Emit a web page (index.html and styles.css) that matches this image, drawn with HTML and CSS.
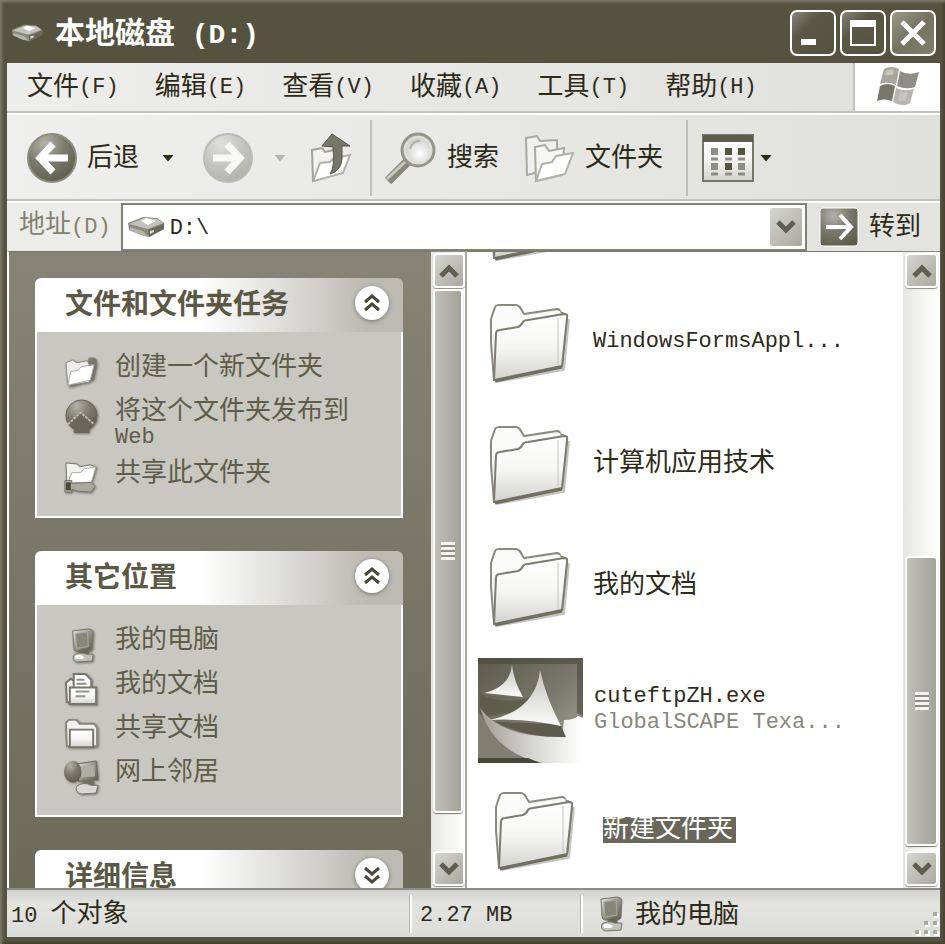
FILE: index.html
```html
<!DOCTYPE html>
<html lang="zh-CN">
<head>
  <meta charset="UTF-8">
  <meta name="viewport" content="width=device-width, initial-scale=1.0">
  <title>本地磁盘 (D:)</title>
  <link rel="stylesheet" href="styles.css">
</head>
<body>

<!-- Shared icons -->
<svg class="defs" aria-hidden="true">
  <defs>
    <linearGradient id="gFolder" x1="0" y1="0" x2="0" y2="1">
      <stop offset="0" stop-color="#ffffff"/>
      <stop offset="0.5" stop-color="#f6f6f5"/>
      <stop offset="1" stop-color="#d3d3cd"/>
    </linearGradient>
    <linearGradient id="gMetal" x1="0" y1="0" x2="1" y2="1">
      <stop offset="0" stop-color="#e6e6e0"/>
      <stop offset="0.5" stop-color="#95948a"/>
      <stop offset="1" stop-color="#5b5a4b"/>
    </linearGradient>
    <radialGradient id="gBack" cx="0.35" cy="0.2" r="0.85">
      <stop offset="0" stop-color="#b4b3a9"/>
      <stop offset="0.5" stop-color="#7b7a6c"/>
      <stop offset="1" stop-color="#5d5c4d"/>
    </radialGradient>
    <radialGradient id="gForward" cx="0.35" cy="0.2" r="0.9">
      <stop offset="0" stop-color="#dededa"/>
      <stop offset="1" stop-color="#aeaea8"/>
    </radialGradient>
    <radialGradient id="gLens" cx="0.55" cy="0.6" r="0.6">
      <stop offset="0" stop-color="#ffffff"/>
      <stop offset="1" stop-color="#c2c2bc"/>
    </radialGradient>
    <linearGradient id="gSky" x1="0" y1="0" x2="1" y2="1">
      <stop offset="0" stop-color="#5c5b4c"/>
      <stop offset="0.5" stop-color="#77766a"/>
      <stop offset="1" stop-color="#a9a99e"/>
    </linearGradient>
    <linearGradient id="gWave" x1="0" y1="0" x2="1" y2="0">
      <stop offset="0" stop-color="#9d9d92"/>
      <stop offset="0.5" stop-color="#d5d5cf"/>
      <stop offset="1" stop-color="#ffffff"/>
    </linearGradient>
    <linearGradient id="gSail" x1="0" y1="0" x2="0" y2="1">
      <stop offset="0" stop-color="#c4c4bc"/>
      <stop offset="1" stop-color="#fafaf8"/>
    </linearGradient>
  </defs>

  <symbol id="folder" viewBox="0 0 82 82">
    <path d="M7 78 L74 66 L79 16" fill="none" stroke="#8c8b80" stroke-width="4" stroke-linejoin="round" opacity=".5"/>
    <path d="M5 77 L2 40 L2 16 L6 4 Q7 2 10 2 L27 2 Q31 3 32 6 L35 11 L68 6 Q71 6 71 9 L78 12 L73 63 Z" fill="#f3f3f1" stroke="#8a897d" stroke-width="2" stroke-linejoin="round"/>
    <path d="M3 17 L3 35 Q4 28 10 27 L30 24 L36 18 L72 11 L71 8 L35 13 L28 3 L8 3 Z" fill="#fbfbfa"/>
    <path d="M5 77 L7 31 Q7 27 11 27 L29 24 Q32 23 34 19 Q35 17 39 17 L75 11 Q79 11 78 15 L73 63 Z" fill="url(#gFolder)" stroke="#7d7c6f" stroke-width="2" stroke-linejoin="round"/>
    <path d="M69 15 L69 62" stroke="#c5c5be" stroke-width="1"/>
    <path d="M6 78 L73 64" stroke="#716f60" stroke-width="3"/>
  </symbol>

  <symbol id="computer" viewBox="0 0 34 36">
    <path d="M8 3 L24 1 Q28 1 29 4 L28 21 Q28 24 23 24 L12 24 Q9 24 9 20 Z" fill="url(#gMetal)" stroke="#77766a"/>
    <path d="M11 6 L23 4 L24 19 L12 21 Z" fill="#87867a" stroke="#aaa99f"/>
    <path d="M14 23 L24 21 L25 29 L16 29 Z" fill="#68675a"/>
    <path d="M9 28 Q14 24 22 27 L29 27 L28 34 L12 35 Q7 33 9 28 Z" fill="#c1c1b8" stroke="#76756a"/>
    <path d="M10 29 Q15 26 20 30 L18 32 L11 32 Z" fill="#fff"/>
  </symbol>

  <symbol id="drive" viewBox="0 0 38 22">
    <path d="M1 7 L16 1 L30 2 L37 7 L37 13 L22 21 L14 19 L2 14 Z" fill="#8a897d"/>
    <path d="M2 8 L17 2 L30 3 L36 7 L21 13 Z" fill="#c3c3bb"/>
    <path d="M14 5 L19 2 L29 5 L21 9 Z" fill="#fff"/>
    <path d="M3 11 L16 15 L21 20 L14 19 L3 14 Z" fill="#b3b3aa"/>
    <path d="M21 14 L37 8 L37 13 L22 21 Z" fill="#68675a"/>
    <path d="M23 15 L27 14 L27 16 L23 18 Z" fill="#dcdcd6"/>
  </symbol>

  <symbol id="up" viewBox="0 0 20 14"><path d="M2 12 L10 4 L18 12" fill="none" stroke="currentColor" stroke-width="5"/></symbol>
  <symbol id="down" viewBox="0 0 20 14"><path d="M2 2 L10 10 L18 2" fill="none" stroke="currentColor" stroke-width="5"/></symbol>
  <symbol id="chevrons" viewBox="0 0 16 18"><path d="M1 8 L8 2 L15 8 M1 16 L8 10 L15 16" fill="none" stroke="currentColor" stroke-width="3"/></symbol>
</svg>

<div class="window">

  <header class="titlebar">
    <svg class="title-icon" viewBox="0 0 38 22"><use href="#drive"/></svg>
    <h1 class="title">本地磁盘<span class="latin"> (D:)</span></h1>
    <div class="window-buttons">
      <button class="win-btn" aria-label="最小化"><svg viewBox="0 0 42 42"><rect x="9" y="27" width="15" height="6" fill="#fff"/></svg></button>
      <button class="win-btn" aria-label="最大化"><svg viewBox="0 0 42 42"><path d="M9 9 H33 V33 H9 Z" fill="none" stroke="#fff" stroke-width="2"/><rect x="8" y="8" width="26" height="7" fill="#fff"/></svg></button>
      <button class="win-btn close" aria-label="关闭"><svg viewBox="0 0 42 42"><path d="M10 10 L32 32 M32 10 L10 32" stroke="#fff" stroke-width="5"/></svg></button>
    </div>
  </header>

  <div class="menubar">
    <nav class="menu">
      <button class="menu-item">文件<span class="latin">(F)</span></button>
      <button class="menu-item">编辑<span class="latin">(E)</span></button>
      <button class="menu-item">查看<span class="latin">(V)</span></button>
      <button class="menu-item">收藏<span class="latin">(A)</span></button>
      <button class="menu-item">工具<span class="latin">(T)</span></button>
      <button class="menu-item">帮助<span class="latin">(H)</span></button>
    </nav>
    <div class="flag">
      <svg viewBox="0 0 44 42" width="44" height="42">
        <path d="M8 3 Q15 -1 23 3 L20 19 Q12 15 4 18 Z" fill="#a6a69d"/>
        <path d="M24 5 Q33 10 43 6 L39 21 Q30 24 21 20 Z" fill="#8f8e84"/>
        <path d="M4 20 Q11 16 19 20 L16 35 Q8 32 1 35 Z" fill="#77766a"/>
        <path d="M20 22 Q29 26 38 23 L34 37 Q26 42 17 36 Z" fill="#b6b6ae"/>
        <path d="M10 5 Q14 2 18 4 L17 9 Q12 8 9 10 Z M24 25 Q29 27 32 26 L30 34 Q26 36 22 34 Z" fill="#c6c6bf"/>
      </svg>
    </div>
  </div>

  <div class="toolbar">
    <button class="tool back">
      <svg viewBox="0 0 50 50" width="50" height="50">
        <circle cx="25" cy="25" r="24" fill="url(#gBack)" stroke="#8d8c80" stroke-width="2"/>
        <path d="M41 25 H13 M26 11 L13 25 L26 39" fill="none" stroke="#fff" stroke-width="7"/>
      </svg>
      <span>后退</span>
    </button>
    <button class="caret" aria-label="后退列表"></button>
    <button class="tool forward" aria-label="前进" disabled>
      <svg viewBox="0 0 50 50" width="50" height="50">
        <circle cx="25" cy="25" r="24" fill="url(#gForward)" stroke="#bcbcb6" stroke-width="2"/>
        <path d="M10 25 H37 M24 11 L37 25 L24 39" fill="none" stroke="#f8f8f6" stroke-width="7"/>
      </svg>
    </button>
    <button class="caret" aria-label="前进列表" disabled></button>
    <button class="tool upward" aria-label="向上">
      <svg viewBox="0 0 42 50" width="42" height="50">
        <path d="M2 17 L12 15 L15 19 L24 17 L24 40 L3 48 Z" fill="#f2f2f0" stroke="#a3a298" stroke-width="2"/>
        <path d="M4 46 L10 30 L20 29 L24 25 L40 22 L33 40 L4 48 Z" fill="#fff" stroke="#b1b1a8" stroke-width="2"/>
        <path d="M22 1 L40 13 L32 13 L32 26 Q31 38 20 41 Q25 34 23 14 L12 13 Z" fill="#77766a" stroke="#57564a"/>
      </svg>
    </button>
    <span class="separator"></span>
    <button class="tool search">
      <svg viewBox="0 0 52 52" width="52" height="52">
        <path d="M22 30 L3 49" stroke="#88877c" stroke-width="9"/>
        <path d="M20 30 L2 47" stroke="#c9c9c2" stroke-width="3"/>
        <circle cx="33" cy="18" r="16" fill="url(#gLens)" stroke="#96958b" stroke-width="3"/>
        <circle cx="33" cy="18" r="13" fill="none" stroke="#dfdfda" stroke-width="2"/>
        <path d="M25 17 Q27 9 35 9" fill="none" stroke="#aeaea6" stroke-width="2"/>
      </svg>
      <span>搜索</span>
    </button>
    <button class="tool folders">
      <svg viewBox="0 0 50 50" width="50" height="50">
        <path d="M1 5 L12 3 L15 8 L32 7 L32 34 L2 42 Z" fill="#f0f0ee" stroke="#aaa99f" stroke-width="2"/>
        <path d="M10 14 L20 12 L24 18 L39 15 L37 42 L11 48 Z" fill="#f6f6f4" stroke="#aaa99f" stroke-width="2"/>
        <path d="M11 48 L17 31 L27 29 L31 23 L48 20 L40 41 Z" fill="#fff" stroke="#b1b1a8" stroke-width="2"/>
      </svg>
      <span>文件夹</span>
    </button>
    <span class="separator"></span>
    <button class="tool views" aria-label="查看方式">
      <svg viewBox="0 0 52 48" width="52" height="48">
        <rect x="1" y="1" width="50" height="46" fill="url(#gFolder)" stroke="#77766a" stroke-width="2"/>
        <rect x="1" y="1" width="50" height="7" fill="#5d5c4d"/>
        <path d="M9 14 h7 v7 h-7 Z M9 29 h7 v7 h-7 Z M36 29 h7 v7 h-7 Z" fill="#8f8e84"/>
        <path d="M23 14 h7 v7 h-7 Z M36 14 h7 v7 h-7 Z M23 29 h7 v7 h-7 Z" fill="#55543f"/>
        <path d="M9 25 h7 M23 25 h7 M36 25 h7 M9 40 h7 M23 40 h7 M36 40 h7" stroke="#8f8e84" stroke-width="3"/>
      </svg>
    </button>
    <button class="caret" aria-label="查看列表"></button>
  </div>

  <form class="address-bar">
    <label class="address-label" for="address">地址<span class="latin">(D)</span></label>
    <div class="address-box">
      <svg viewBox="0 0 38 22" width="38" height="24"><use href="#drive"/></svg>
      <input class="address-input" id="address" type="text" value="D:\">
      <button type="button" class="scroll-btn drop" aria-label="展开"><svg viewBox="0 0 20 14"><use href="#down"/></svg></button>
    </div>
    <button type="button" class="go">
      <svg viewBox="0 0 40 40" width="40" height="40">
        <rect x="1" y="1" width="38" height="38" rx="3" fill="url(#gBack)" stroke="#fff" stroke-width="1"/>
        <path d="M7 20 H32 M21 8 L32 20 L21 32" fill="none" stroke="#fff" stroke-width="4"/>
      </svg>
      <span>转到</span>
    </button>
  </form>

  <div class="body">
    <aside class="sidebar">
      <section class="group">
        <div class="group-head">
          <h2>文件和文件夹任务</h2>
          <button class="toggle" aria-label="收起"><svg viewBox="0 0 16 18"><use href="#chevrons"/></svg></button>
        </div>
        <ul class="group-list">
          <li><a href="#" class="task">
            <svg viewBox="0 0 36 36">
              <path d="M25 3 Q36 0 34 12 L31 26 L5 34 L24 16 Z" fill="#716f60" opacity=".7"/>
              <path d="M2 8 L9 5 L13 8 L24 6 L27 12 L26 28 L4 31 Z" fill="#eeeeeb" stroke="#88877c"/>
              <path d="M4 31 L7 17 L14 16 L18 12 L31 10 L27 26 Z" fill="#fff" stroke="#aaa99f"/>
            </svg>
            <span>创建一个新文件夹</span></a></li>
          <li><a href="#" class="task">
            <svg viewBox="0 0 36 36">
              <circle cx="18" cy="17" r="16" fill="url(#gBack)" stroke="#68675a"/>
              <path d="M4 26 L17 14 L31 26 L26 26 L26 35 L10 35 L10 26 Z" fill="#68675a"/>
              <path d="M4 26 L17 14 L31 26" fill="none" stroke="#bcbcb3" stroke-width="2" stroke-dasharray="3 1"/>
            </svg>
            <span>将这个文件夹发布到<span class="latin block">Web</span></span></a></li>
          <li><a href="#" class="task">
            <svg viewBox="0 0 36 36">
              <path d="M2 2 L13 3 L16 6 L27 4 L33 6 L28 23 L3 25 Z" fill="#f1f1ee" stroke="#77766a"/>
              <path d="M4 22 L8 12 L17 12 L21 8 L33 6 L28 22 Z" fill="#fff" stroke="#aaa99f"/>
              <path d="M1 20 L8 20 L8 23 L28 22 L32 26 L28 32 L14 31 L8 29 L8 32 L1 32 Z" fill="#a9a99f" stroke="#77766a"/>
              <rect x="2" y="22" width="5" height="8" fill="#49483a"/>
            </svg>
            <span>共享此文件夹</span></a></li>
        </ul>
      </section>

      <section class="group">
        <div class="group-head">
          <h2>其它位置</h2>
          <button class="toggle" aria-label="收起"><svg viewBox="0 0 16 18"><use href="#chevrons"/></svg></button>
        </div>
        <ul class="group-list">
          <li><a href="#" class="task"><svg viewBox="0 0 34 36"><use href="#computer"/></svg><span>我的电脑</span></a></li>
          <li><a href="#" class="task">
            <svg viewBox="0 0 36 36">
              <path d="M2 11 L7 7 L11 10 L11 31 L3 31 Z" fill="#f1f1ee" stroke="#77766a" stroke-width="2"/>
              <path d="M10 2 H22 L28 8 V18 H10 Z" fill="#fff" stroke="#77766a" stroke-width="2"/>
              <path d="M13 8 h8 M13 12 h10" stroke="#8f8e84" stroke-width="2"/>
              <path d="M6 16 H33 V33 H6 Z" fill="url(#gFolder)" stroke="#77766a" stroke-width="2"/>
              <path d="M12 20 h14 M12 25 h10" stroke="#96958b" stroke-width="2"/>
            </svg>
            <span>我的文档</span></a></li>
          <li><a href="#" class="task">
            <svg viewBox="0 0 36 36">
              <path d="M2 7 L5 4 H13 L16 8 H31 L34 12 V31 H3 Z" fill="#f1f1ee" stroke="#88877c" stroke-width="2"/>
              <path d="M6 14 H30 V32 H6 Z" fill="url(#gFolder)" stroke="#77766a" stroke-width="2"/>
            </svg>
            <span>共享文档</span></a></li>
          <li><a href="#" class="task">
            <svg viewBox="0 0 36 36">
              <path d="M14 4 L33 1 L35 20 L15 22 Z" fill="url(#gMetal)" stroke="#68675a"/>
              <path d="M17 7 L31 5 L32 17 L18 18 Z" fill="#aeaea4"/>
              <ellipse cx="9" cy="12" rx="9" ry="11" fill="url(#gBack)"/>
              <path d="M19 21 L30 20 L32 28 L20 28 Z" fill="#716f60"/>
              <path d="M13 27 Q20 22 28 26 L35 26 L33 34 L18 35 Q11 33 13 27 Z" fill="#d8d8d2" stroke="#77766a"/>
            </svg>
            <span>网上邻居</span></a></li>
        </ul>
      </section>

      <section class="group">
        <div class="group-head">
          <h2>详细信息</h2>
          <button class="toggle flipped" aria-label="展开"><svg viewBox="0 0 16 18"><use href="#chevrons"/></svg></button>
        </div>
      </section>
    </aside>

    <div class="scrollbar side">
      <button class="scroll-btn" aria-label="向上滚动"><svg viewBox="0 0 20 14"><use href="#up"/></svg></button>
      <div class="track"><div class="thumb"><i class="grip"></i></div></div>
      <button class="scroll-btn" aria-label="向下滚动"><svg viewBox="0 0 20 14"><use href="#down"/></svg></button>
    </div>

    <main class="content">
      <ul class="files">
        <li class="file"><svg class="folder-icon" viewBox="0 0 82 82"><use href="#folder"/></svg></li>
        <li class="file"><svg class="folder-icon" viewBox="0 0 82 82"><use href="#folder"/></svg><span class="latin">WindowsFormsAppl...</span></li>
        <li class="file"><svg class="folder-icon" viewBox="0 0 82 82"><use href="#folder"/></svg><span>计算机应用技术</span></li>
        <li class="file"><svg class="folder-icon" viewBox="0 0 82 82"><use href="#folder"/></svg><span>我的文档</span></li>
        <li class="file program">
          <svg class="program-icon" viewBox="0 0 105 105">
            <rect width="105" height="105" fill="url(#gSky)"/>
            <path d="M2 36 Q24 48 60 38 L50 52 L10 58 L2 56 Z" fill="#55543f" opacity=".6"/>
            <path d="M0 54 Q14 74 30 86 Q44 98 62 105 H0 Z" fill="#807f72"/>
            <path d="M2 50 Q24 80 84 79 L86 62 Q96 62 100 58 L105 60 V105 H66 Q16 96 2 50 Z" fill="url(#gWave)"/>
            <path d="M18 64 L82 66 L88 79 Q48 80 18 64 Z" fill="#5c5b4d"/>
            <path d="M34 7 Q36 24 45 39 Q25 37 6 35 Q32 29 34 7 Z" fill="url(#gSail)"/>
            <path d="M62 12 Q68 40 83 68 Q48 60 12 62 Q58 52 62 12 Z" fill="url(#gSail)"/>
            <path d="M0 0 H105 V58 L99 55 V6 H0 Z" fill="#494838" opacity=".6"/>
            <path d="M0 100 H50 L62 105 H0 Z" fill="#494838"/>
          </svg>
          <span class="latin">cuteftpZH.exe<span class="vendor">GlobalSCAPE Texa...</span></span>
        </li>
        <li class="file selected"><svg class="folder-icon" viewBox="0 0 82 82"><use href="#folder"/></svg><span class="name">新建文件夹</span></li>
      </ul>
    </main>

    <div class="scrollbar">
      <button class="scroll-btn" aria-label="向上滚动"><svg viewBox="0 0 20 14"><use href="#up"/></svg></button>
      <div class="track"><div class="thumb low"><i class="grip"></i></div></div>
      <button class="scroll-btn" aria-label="向下滚动"><svg viewBox="0 0 20 14"><use href="#down"/></svg></button>
    </div>
  </div>

  <footer class="statusbar">
    <div class="status"><span><span class="latin">10 </span>个对象</span></div>
    <div class="status"><span class="latin">2.27 MB</span></div>
    <div class="status place">
      <svg viewBox="0 0 34 36" width="34" height="36"><use href="#computer"/></svg>
      <span>我的电脑</span>
      <svg class="resize" viewBox="0 0 26 26" width="26" height="26">
        <path d="M20 2h5v5h-5zM11 11h5v5h-5zM20 11h5v5h-5zM2 20h5v5h-5zM11 20h5v5h-5zM20 20h5v5h-5z" fill="#fff"/>
        <path d="M19 1h4v4h-4zM10 10h4v4h-4zM19 10h4v4h-4zM1 19h4v4h-4zM10 19h4v4h-4zM19 19h4v4h-4z" fill="#aaa99f"/>
      </svg>
    </div>
  </footer>

</div>

</body>
</html>
```

FILE: styles.css
```css
* {
  box-sizing: border-box;
}

body {
  margin: 0;
  font-family: "Liberation Mono", "Noto Sans CJK SC", monospace;
  font-size: 26px;
  line-height: 26px;
  color: #2d2b18;
}

button {
  display: flex;
  align-items: center;
  padding: 0;
  border: 0;
  background: none;
  font: inherit;
  color: inherit;
  white-space: nowrap;
}

ul, h1, h2 {
  margin: 0;
  padding: 0;
  list-style: none;
}

svg {
  display: block;
  flex: none;
}

.defs {
  position: absolute;
  width: 0;
  height: 0;
}

.latin {
  font-size: 22px;
  white-space: pre;
}

.block {
  display: block;
}

.window {
  display: flex;
  flex-direction: column;
  height: 100vh;
  padding: 0 5px 7px 7px;
  background: #55533f;
  box-shadow: inset 2px 2px 3px #7c7b6c, inset -2px -2px 2px #45432f;
}

/* Title bar */
.titlebar {
  display: flex;
  flex: none;
  align-items: center;
  height: 63px;
  padding: 3px 4px 0;
}

.title-icon {
  width: 32px;
  height: 20px;
  margin-right: 12px;
}

.title {
  flex: 1;
  padding-top: 4px;
  font-size: 30px;
  color: #fff;
}

.title .latin {
  font-size: 28px;
}

.window-buttons {
  display: flex;
  gap: 4px;
}

.win-btn {
  width: 46px;
  height: 46px;
  border: 2px solid #fff;
  border-radius: 7px;
  background: linear-gradient(135deg, #85847a, #5a5846 35%, #55533f);
}

.win-btn.close {
  background: linear-gradient(135deg, #9a998e, #74735f 50%, #807f70);
}

/* Menu */
.menubar {
  display: flex;
  flex: none;
  height: 52px;
  background: linear-gradient(90deg, #ededeb, #e0e0dd);
  border-bottom: 2px solid #fff;
}

.menu {
  display: flex;
  flex: 1;
  gap: 36px;
  padding: 2px 0 0 20px;
  border-bottom: 2px solid #c3c3be;
}

.flag {
  display: flex;
  align-items: center;
  justify-content: center;
  width: 87px;
  background: #fff;
  border-left: 2px solid #c3c3be;
  border-bottom: 2px solid #c3c3be;
}

/* Toolbar */
.toolbar {
  display: flex;
  flex: none;
  align-items: center;
  height: 88px;
  padding-left: 20px;
  background: linear-gradient(90deg, #efefed, #e0e0dd);
  border-bottom: 2px solid #fff;
  box-shadow: inset 0 -2px #c3c3be;
}

.tool {
  gap: 10px;
}

.tool span,
.go span {
  padding-top: 2px;
}

.caret {
  width: 12px;
  height: 7px;
  margin: 0 29px 0 23px;
  background: currentColor;
  clip-path: polygon(0 0, 100% 0, 50% 100%);
}

.caret:disabled {
  margin-right: 24px;
  margin-left: 21px;
  color: #b6b6b0;
}

.views + .caret {
  margin-left: 6px;
}

.separator {
  width: 2px;
  height: 76px;
  background: #c0c0bb;
}

.upward {
  margin-right: 18px;
}

.search {
  margin: 0 26px 0 13px;
}

.folders {
  margin-right: 23px;
}

.views {
  margin-left: 14px;
}

/* Address */
.address-bar {
  display: flex;
  flex: none;
  height: 48px;
  background: #e3e3e0;
}

.address-label {
  padding: 10px 10px 0 12px;
  color: #84826f;
  background: #ecece9;
}

.address-box {
  display: flex;
  flex: 1;
  align-items: center;
  min-width: 0;
  padding: 0 1px 0 4px;
  border: 2px solid #828174;
  background: #fff;
}

.address-input {
  flex: 1;
  min-width: 0;
  padding: 4px 0 0 5px;
  border: 0;
  outline: 0;
  background: none;
  font: inherit;
  font-size: 22px;
  color: inherit;
}

.go {
  gap: 10px;
  padding: 0 19px 0 12px;
}

/* Body */
.body {
  display: flex;
  flex: 1;
  min-height: 0;
  background: #fff;
  border-bottom: 2px solid #8f8e84;
}

.sidebar {
  display: flex;
  flex: none;
  flex-direction: column;
  gap: 33px;
  width: 424px;
  padding: 26px 28px 0 26px;
  border-left: 2px solid #fff;
  border-top: 1px solid #77766a;
  overflow: hidden;
  background: linear-gradient(#858475, #6c6b5a);
}

.group {
  flex: none;
}

.group-head {
  display: flex;
  align-items: center;
  justify-content: space-between;
  height: 54px;
  padding: 0 14px 0 30px;
  border-radius: 6px 6px 0 0;
  background: linear-gradient(90deg, #fff 45%, #bcbbb2 90%);
}

.group-head h2 {
  padding-top: 3px;
  font-size: 28px;
  color: #5b5945;
}

.toggle {
  justify-content: center;
  width: 34px;
  height: 34px;
  margin-bottom: 4px;
  border-radius: 50%;
  background: #fff;
  box-shadow: 0 1px 4px #77766a;
  color: #49483a;
}

.toggle svg {
  width: 16px;
  height: 18px;
}

.toggle.flipped svg {
  transform: rotate(180deg);
}

.group-list {
  display: flex;
  flex-direction: column;
  gap: 10px;
  padding: 23px 20px 21px 27px;
  border: 2px solid #fff;
  border-top: 0;
  background: #c8c7c0;
}

.task {
  display: flex;
  gap: 16px;
  min-height: 34px;
  color: #5f5d4a;
  text-decoration: none;
}

.task svg {
  width: 35px;
  height: 35px;
  margin-bottom: -1px;
  filter: drop-shadow(1px 1px 1px #77766a);
}

/* Scrollbars */
.scrollbar {
  display: flex;
  flex: none;
  flex-direction: column;
  width: 37px;
  padding: 1px 2px 2px;
  border-top: 1px solid #8f8e84;
  background: linear-gradient(90deg, #e6e6e2, #fff);
}

.scrollbar.side {
  width: 36px;
  border-right: 2px solid #aaa99f;
}

.scroll-btn {
  flex: none;
  justify-content: center;
  width: 33px;
  height: 35px;
  border: 2px solid #fff;
  border-radius: 4px;
  background: linear-gradient(135deg, #d6d6d1, #a9a99f);
  box-shadow: 0 1px 1px #8f8e84;
  color: #5f5e50;
}

.side .scroll-btn {
  width: 32px;
}

.scroll-btn svg {
  width: 20px;
  height: 14px;
}

.scroll-btn.drop {
  width: 36px;
  height: 42px;
  box-shadow: none;
}

.track {
  display: flex;
  flex: 1;
  flex-direction: column;
  min-height: 0;
  padding: 1px 0 5px;
}

.thumb {
  display: flex;
  align-items: center;
  justify-content: center;
  height: 94%;
  border: 2px solid #fff;
  border-radius: 4px;
  background: linear-gradient(90deg, #c0c0b9, #a3a399);
  box-shadow: 0 1px 1px #77766a;
}

.thumb.low {
  height: 52%;
  margin-top: auto;
}

.grip {
  width: 14px;
  height: 18px;
  background: repeating-linear-gradient(#f3f3f0 0 3px, #8f8e84 3px 5px);
}

/* Files */
.content {
  flex: 1;
  min-width: 0;
  overflow: hidden;
  border-top: 1px solid #77766a;
}

.files {
  margin-top: -91px;
}

.file {
  display: flex;
  align-items: center;
  gap: 22px;
  height: 122px;
  padding-left: 22px;
  white-space: nowrap;
}

.file > span {
  margin-bottom: 4px;
}

.folder-icon {
  width: 82px;
  height: 82px;
}

.program {
  gap: 11px;
  padding-left: 11px;
}

.program-icon {
  width: 105px;
  height: 105px;
}

.file.program > span {
  margin: 0;
}

.vendor {
  display: block;
  color: #88877b;
}

.selected {
  gap: 27px;
  padding-left: 27px;
}

.name {
  padding-right: 3px;
  background: #68675a;
  color: #fff;
}

/* Status bar */
.statusbar {
  display: grid;
  flex: none;
  grid-template-columns: 403fr 171fr 359fr;
  align-items: center;
  height: 47px;
  padding: 2px 0;
  background: linear-gradient(#d3d3ce, #e3e3e0 30%, #dcdcd8);
}

.status {
  display: flex;
  align-items: center;
  height: 38px;
  padding-left: 8px;
  border-left: 2px solid #fff;
  box-shadow: -1px 0 #b6b6b0;
}

.status > span {
  padding-top: 4px;
}

.status:first-child {
  padding-left: 4px;
  border-left: 0;
  box-shadow: none;
}

.place {
  padding-left: 10px;
  gap: 8px;
}

.resize {
  align-self: flex-end;
  margin: 0 0 -4px auto;
}
```
